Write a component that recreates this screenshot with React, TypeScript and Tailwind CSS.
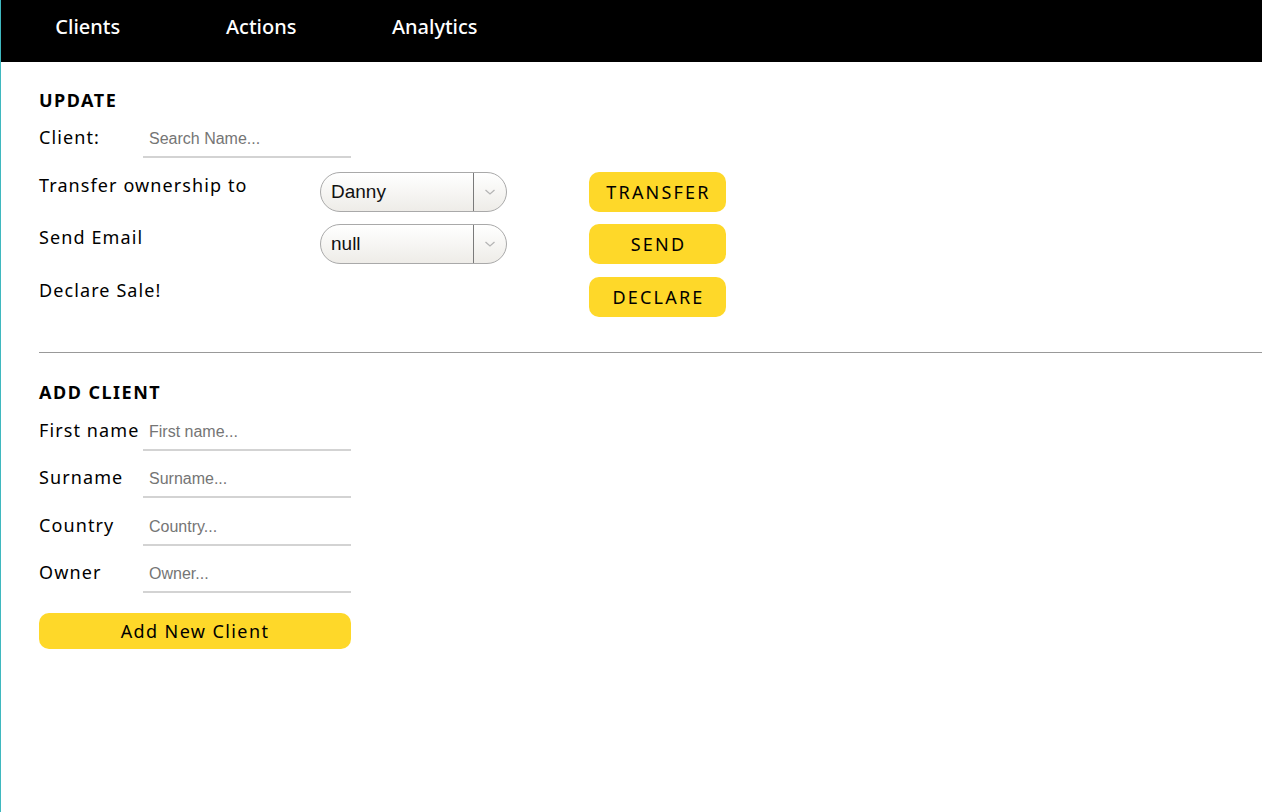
import React from "react";

const ui = { fontFamily: '"Noto Sans", "Open Sans", sans-serif' };
const arial = { fontFamily: '"Liberation Sans", Arial, sans-serif' };

function FakeSelect({ value }: { value: string }) {
  return (
    <div className="flex h-[40px] w-[187px] items-stretch overflow-hidden rounded-full border border-[#a9a9a9] bg-gradient-to-b from-[#ffffff] to-[#eeece8]">
      <div className="flex flex-1 items-center pl-[10px] text-[19px] text-[#111]" style={arial}>
        {value}
      </div>
      <div className="w-[1px] bg-[#7a7a7a]" />
      <div className="flex w-[32px] items-center justify-center">
        <svg width="12" height="8" viewBox="0 0 12 8" fill="none">
          <path d="M1.5 2 L6 6 L10.5 2" stroke="#b5b5b5" strokeWidth="1.3" />
        </svg>
      </div>
    </div>
  );
}

function YButton({ label }: { label: string }) {
  return (
    <button className="h-[40px] w-[137px] rounded-[10px] bg-[#fed829] pl-[2px] text-[18px] tracking-[2.2px] text-black" style={ui}>
      {label}
    </button>
  );
}

function TextInput({ placeholder }: { placeholder: string }) {
  return (
    <input
      placeholder={placeholder}
      className="h-[32px] w-[208px] border-b-2 border-[#d3d3d3] bg-transparent px-[6px] pb-[4px] text-[16px] text-black outline-none placeholder:text-[#757575]"
      style={arial}
    />
  );
}

function FieldRow({ label, placeholder, className = "" }: { label: string; placeholder: string; className?: string }) {
  return (
    <div className={"flex items-start " + className}>
      <div className="min-w-[104px] whitespace-nowrap text-[18px] leading-[22px] tracking-[1.1px]">{label}</div>
      <TextInput placeholder={placeholder} />
    </div>
  );
}

export default function App() {
  return (
    <div className="min-h-[812px] border-l border-[#3fb8bf] bg-white text-black" style={ui}>
      <nav className="flex h-[62px] items-start bg-black">
        {["Clients", "Actions", "Analytics"].map((n) => (
          <div key={n} className="mt-[13px] w-[173.5px] text-center text-[20px] font-medium leading-[28px] text-white">
            {n}
          </div>
        ))}
      </nav>
      <div className="pl-[38px]">
        <h2 className="mt-[27px] text-[18px] font-bold leading-[22px] tracking-[1.5px]">UPDATE</h2>
        <FieldRow className="mt-[15px]" label="Client:" placeholder="Search Name..." />

        <div className="mt-[14px] flex items-start">
          <div className="w-[281px] text-[18px] leading-[26px] tracking-[1.1px]">Transfer ownership to</div>
          <FakeSelect value="Danny" />
          <div className="ml-[82px]">
            <YButton label="TRANSFER" />
          </div>
        </div>
        <div className="mt-[12px] flex items-start">
          <div className="w-[281px] text-[18px] leading-[26px] tracking-[1.1px]">Send Email</div>
          <FakeSelect value="null" />
          <div className="ml-[82px]">
            <YButton label="SEND" />
          </div>
        </div>
        <div className="mt-[13px] flex items-start">
          <div className="w-[550px] text-[18px] leading-[26px] tracking-[1.1px]">Declare Sale!</div>
          <YButton label="DECLARE" />
        </div>

        <hr className="mt-[35px] border-0 border-t border-[#999]" />

        <h2 className="mt-[28px] text-[18px] font-bold leading-[22px] tracking-[1.5px]">ADD CLIENT</h2>
        <FieldRow className="mt-[16px]" label="First name" placeholder="First name..." />
        <FieldRow className="mt-[15px]" label="Surname" placeholder="Surname..." />
        <FieldRow className="mt-[16px]" label="Country" placeholder="Country..." />
        <FieldRow className="mt-[15px]" label="Owner" placeholder="Owner..." />
        <button className="mt-[20px] h-[36px] w-[312px] rounded-[10px] bg-[#fed829] text-[18px] tracking-[1.4px] text-black" style={ui}>
          Add New Client
        </button>
      </div>
    </div>
  );
}
